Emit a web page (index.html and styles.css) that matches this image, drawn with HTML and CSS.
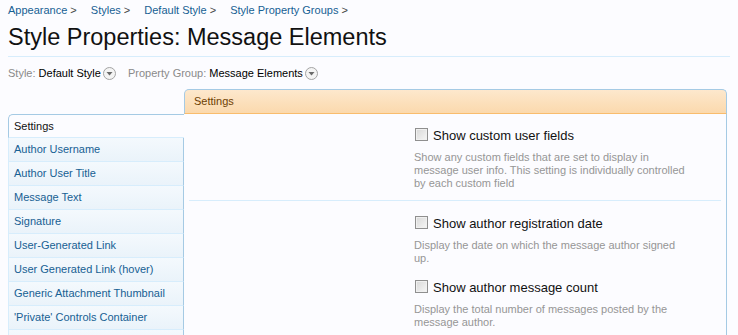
FILE: index.html
```html
<!DOCTYPE html>
<html lang="en">
<head>
    <meta charset="UTF-8">
    <title>Style Properties: Message Elements</title>
    <link rel="stylesheet" href="styles.css">
</head>
<body>
    <div class="breadcrumb">
        <a href="#">Appearance</a><span class="sep">&gt;</span>
        <a href="#">Styles</a><span class="sep">&gt;</span>
        <a href="#">Default Style</a><span class="sep">&gt;</span>
        <a href="#">Style Property Groups</a><span class="sep">&gt;</span>
    </div>

    <h1 class="title">Style Properties: Message Elements</h1>

    <div class="filters">
        <span class="filter"><span class="filter-label">Style:</span> Default Style<svg class="drop" width="13" height="13" viewBox="0 0 13 13"><circle cx="6.5" cy="6.5" r="6" fill="#f4f4f4" stroke="#a3a3a3"/><path d="M3.5 5h6l-3 3.5z" fill="#6a6a6a"/></svg></span>
        <span class="filter"><span class="filter-label">Property Group:</span> Message Elements<svg class="drop" width="13" height="13" viewBox="0 0 13 13"><circle cx="6.5" cy="6.5" r="6" fill="#f4f4f4" stroke="#a3a3a3"/><path d="M3.5 5h6l-3 3.5z" fill="#6a6a6a"/></svg></span>
    </div>

    <div class="editor">
        <ul class="tabs">
            <li class="active">Settings</li>
            <li><a href="#">Author Username</a></li>
            <li><a href="#">Author User Title</a></li>
            <li><a href="#">Message Text</a></li>
            <li><a href="#">Signature</a></li>
            <li><a href="#">User-Generated Link</a></li>
            <li><a href="#">User Generated Link (hover)</a></li>
            <li><a href="#">Generic Attachment Thumbnail</a></li>
            <li><a href="#">'Private' Controls Container</a></li>
            <li></li>
        </ul>

        <div class="panel">
            <div class="panel-head">Settings</div>
            <div class="panel-body">
                <div class="form-row">
                    <div></div>
                    <div>
                        <label class="check"><input type="checkbox"> Show custom user fields</label>
                        <p class="hint">Show any custom fields that are set to display in message user info. This setting is individually controlled by each custom field</p>
                    </div>
                </div>
                <div class="form-row">
                    <div></div>
                    <div>
                        <label class="check"><input type="checkbox"> Show author registration date</label>
                        <p class="hint">Display the date on which the message author signed up.</p>
                        <label class="check next"><input type="checkbox"> Show author message count</label>
                        <p class="hint">Display the total number of messages posted by the message author.</p>
                    </div>
                </div>
            </div>
        </div>
    </div>
</body>
</html>
```

FILE: styles.css
```css
body {
    font-family: "Liberation Sans", Arial, sans-serif;
    margin: 0;
    padding: 3px 8px 0 8px;
    background-color: #fcfcff;
    color: #000;
    overflow: hidden;
}

a {
    color: #176093;
    text-decoration: none;
}

.breadcrumb {
    font-size: 11px;
    line-height: 14px;
}

.breadcrumb .sep {
    color: #444;
    margin: 0 11px 0 3px;
}

.title {
    font-size: 23.5px;
    font-weight: normal;
    line-height: 30px;
    margin: 5px 0 0 0;
    padding-bottom: 4px;
    border-bottom: 1px solid #d7edfc;
    color: #111;
}

.filters {
    font-size: 11px;
    line-height: 14px;
    height: 14px;
    margin-top: 9px;
    white-space: nowrap;
}

.filter {
    margin-right: 9px;
}

.filter-label {
    color: #8a8a8a;
}

.drop {
    margin-left: 2px;
    vertical-align: -3px;
}

.editor {
    display: grid;
    grid-template-columns: 176px 1fr;
    margin-top: 9px;
}

.tabs {
    list-style: none;
    margin: 0;
    padding: 25px 0 0 0;
    font-size: 11px;
}

.tabs li {
    height: 23px;
    line-height: 23px;
    padding-left: 5px;
    border-left: 1px solid #d7edfc;
    border-right: 1px solid #a5cae4;
    border-bottom: 1px solid #d7edfc;
    background: linear-gradient(#f4f9fd, #eaf3fa);
    white-space: nowrap;
}

.tabs li.active {
    height: 22px;
    line-height: 22px;
    background: #fcfcff;
    border-top: 1px solid #a5cae4;
    border-left: 1px solid #a5cae4;
    border-right: none;
    border-top-left-radius: 5px;
    padding-right: 1px;
    color: #111;
}

.panel {
    margin-right: 3px;
}

.panel-head {
    height: 23px;
    line-height: 23px;
    font-size: 11px;
    color: #6d3f03;
    padding-left: 9px;
    border: 1px solid #a5cae4;
    border-bottom: 1px solid #f9bc6d;
    border-radius: 5px 5px 0 0;
    background: linear-gradient(#fde8cd, #fbd9ad);
}

.panel-body {
    border-right: 1px solid #a5cae4;
    height: 400px;
}

.form-row {
    display: grid;
    grid-template-columns: 225px 1fr;
    margin: 0 5px;
    padding: 14px 0 10px 0;
    border-bottom: 1px solid #d7edfc;
}

.form-row + .form-row {
    padding-top: 15px;
    border-bottom: none;
}

.check {
    display: flex;
    align-items: flex-start;
    gap: 5px;
    font-size: 13px;
    line-height: 16px;
    color: #111;
}

.check.next {
    margin-top: 15px;
}

.check input {
    appearance: none;
    width: 13px;
    height: 13px;
    margin: 0 0 0 1px;
    border: 1px solid #8f8f8f;
    background: linear-gradient(135deg, #d8d8d8, #f6f6f6);
    box-shadow: inset 0 0 0 1px #f0f0f0;
}

.hint {
    font-size: 11px;
    line-height: 13px;
    color: #969696;
    max-width: 279px;
    margin: 7px 0 0 0;
}
```
